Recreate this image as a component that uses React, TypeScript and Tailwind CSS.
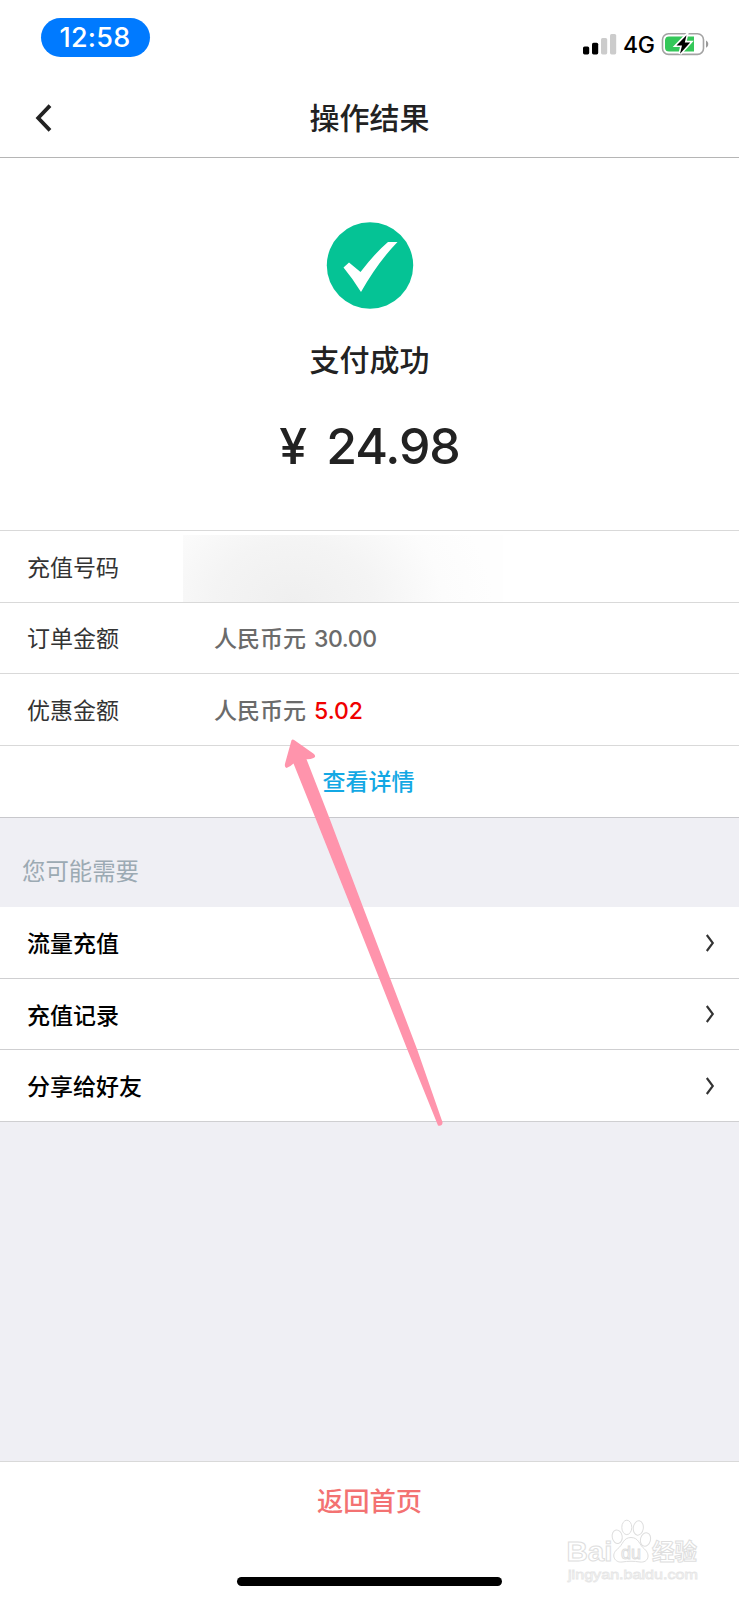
import type { ReactNode } from "react";

const orderRows = [
  { label: "订单金额", unit: "人民币元", value: "30.00", highlight: false },
  { label: "优惠金额", unit: "人民币元", value: "5.02", highlight: true },
];

const links = ["流量充值", "充值记录", "分享给好友"];

function SignalIcon() {
  return (
    <svg width="34" height="22" viewBox="0 0 34 22">
      <rect x="0" y="13.4" width="6.2" height="8" rx="1.6" fill="#000" />
      <rect x="9" y="9.7" width="6.2" height="11.7" rx="1.6" fill="#000" />
      <rect x="18" y="5" width="6.2" height="16.4" rx="1.6" fill="#ccc" />
      <rect x="27" y="1" width="6.2" height="20.4" rx="1.6" fill="#ccc" />
    </svg>
  );
}

function BatteryIcon() {
  return (
    <svg width="49" height="26" viewBox="0 0 49 26">
      <rect x="1.5" y="2.8" width="41" height="20.6" rx="6" fill="#fff" stroke="#a3a3a3" strokeWidth="1.6" />
      <path d="M8 5.6H33V20.6H8A4 4 0 0 1 4 17V9A4 4 0 0 1 8 5.6Z" fill="#34c759" />
      <path d="M45 9.6C48 11 48 15.4 45 16.8Z" fill="#999" />
      <path
        d="M25.5 4.2L15.5 14.4H21L19 22.8L29.2 11.4H23.8Z"
        fill="#000"
        stroke="#fff"
        strokeWidth="3.2"
        strokeLinejoin="miter"
        paintOrder="stroke"
      />
    </svg>
  );
}

function StatusBar() {
  return (
    <div className="flex h-[77px] items-start justify-between pl-[41px] pr-[29px]">
      <div className="mt-[18px] flex h-[39px] w-[109px] items-center justify-center rounded-full bg-[#007aff] pr-[1px] font-['Inter',sans-serif] text-[27px] font-medium leading-none tracking-[0.3px] text-white">
        12:58
      </div>
      <div className="mt-[30px] flex items-center">
        <SignalIcon />
        <span className="ml-[6px] w-[32px] pt-[2px] font-['Inter',sans-serif] text-[23px] font-medium leading-[26px] tracking-[-0.3px]">
          4G
        </span>
        <span className="ml-[6px]">
          <BatteryIcon />
        </span>
      </div>
    </div>
  );
}

function DetailRow({ label, children }: { label: string; children?: ReactNode }) {
  return (
    <div className="flex h-[71.5px] items-center border-b border-[#d9d9d9] pl-[27px] text-[23px] leading-[34px]">
      <span className="w-[187px] pt-[3px] text-[#333]">{label}</span>
      {children}
    </div>
  );
}

// Annotation drawn over the order details.
function PointerArrow() {
  return (
    <svg
      className="pointer-events-none absolute left-[270px] top-[720px]"
      width="200"
      height="420"
      viewBox="0 0 200 420"
    >
      <path
        d="M21.5 20.2Q22.5 19 24.5 20.2L44 34Q46.5 37 43.5 38Q40 39.5 36.5 39.2L59 97L93 187L147 329L172.6 402.5Q172 406.5 168 405.5L137.5 330L81 187L45 97L23.5 43.5Q20 47 16.5 48Q14 47 15.2 43Z"
        fill="#ff94ac"
      />
    </svg>
  );
}

function Watermark() {
  return (
    <svg
      className="pointer-events-none absolute left-[560px] top-[1515px]"
      width="150"
      height="75"
      viewBox="0 0 150 75"
    >
      <g fill="#fff" stroke="#dedede" strokeWidth="1">
        <g fontFamily="Liberation Sans, Noto Sans CJK SC, sans-serif" fontWeight="700">
          <text x="6.5" y="46" fontSize="28" textLength="46" lengthAdjust="spacingAndGlyphs">
            Bai
          </text>
          <text x="92" y="45" fontSize="23" textLength="45" lengthAdjust="spacingAndGlyphs">
            经验
          </text>
        </g>
        <ellipse cx="57.2" cy="21.7" rx="5" ry="6.8" transform="rotate(-10 57.2 21.7)" />
        <ellipse cx="66.8" cy="12.4" rx="5" ry="7.2" />
        <ellipse cx="78.3" cy="13" rx="5" ry="7.2" transform="rotate(8 78.3 13)" />
        <ellipse cx="85.5" cy="24.5" rx="5" ry="6.8" transform="rotate(15 85.5 24.5)" />
        <path d="M71 22.5C63 22.5 63 30 57.5 34C50 40 55 48 62 47C68 46 74 46 80 47C88 48 91 40 84.5 34C79 30 79 22.5 71 22.5Z" />
        <text x="61" y="43.5" fontSize="18" fontFamily="Liberation Sans, sans-serif" textLength="20">
          du
        </text>
        <text
          x="8"
          y="64"
          fontSize="13.5"
          fontFamily="Liberation Sans, sans-serif"
          textLength="130"
          lengthAdjust="spacingAndGlyphs"
          stroke="#e6e6e6"
          strokeWidth="0.8"
        >
          jingyan.baidu.com
        </text>
      </g>
    </svg>
  );
}

export default function App() {
  return (
    <div className="relative flex h-[1600px] w-[739px] flex-col overflow-hidden bg-[#efeff4] font-['Inter','Noto_Sans_CJK_SC',sans-serif] text-black">
      <div className="h-[158px] border-b border-[#b5b5b5] bg-white">
        <StatusBar />
        <header className="grid h-20 grid-cols-[1fr_auto_1fr] items-center pt-[2px] text-[#222]">
          <svg className="ml-[34px]" width="20" height="30" viewBox="0 0 20 30">
            <path d="M16 2.6L4.2 15L16 27.4" fill="none" stroke="#222" strokeWidth="3.8" />
          </svg>
          <h1 className="text-[30px] font-medium leading-[44px]">操作结果</h1>
        </header>
      </div>

      <section className="flex h-[373px] flex-col items-center border-b border-[#d9d9d9] bg-white text-[#222]">
        <svg className="mt-16" width="88" height="88" viewBox="0 0 88 88">
          <circle cx="44" cy="43.5" r="43.2" fill="#05c395" />
          <path d="M17.5 45.5L23 40.5L34.5 50Q49 31 62 20H71.5Q52 40 35 70Q27 57 17.5 45.5Z" fill="#fff" />
        </svg>
        <p className="mt-[28px] text-[30px] font-medium leading-[44px]">支付成功</p>
        <p className="mt-[34px] flex text-[50px] font-medium leading-[60px] tracking-[-1.1px]">
          <span className="w-[47px]">¥</span>
          <span>24.98</span>
        </p>
      </section>

      <section className="bg-white">
        <DetailRow label="充值号码">
          <div className="-ml-[31px] h-full w-[320px] pt-1">
            <div className="h-full bg-[radial-gradient(200px_150px_at_110px_100%,#efefef_0%,#f4f4f4_40%,#fcfcfc_75%,#fefefe_100%)]" />
          </div>
        </DetailRow>
        {orderRows.map((row) => (
          <DetailRow key={row.label} label={row.label}>
            <span className="pt-[3px] font-medium text-[#6b6b6b]">
              {row.unit}
              <span className={row.highlight ? "ml-2 text-[#f00000]" : "ml-2 tracking-[-0.4px]"}>
                {row.value}
              </span>
            </span>
          </DetailRow>
        ))}
        <div className="flex h-[72.5px] items-center justify-center border-b border-[#c8c8cc] pt-[2px] pr-[2px] text-[23px] font-medium leading-[34px] text-[#13a8e4]">
          查看详情
        </div>
      </section>

      <h2 className="h-[89px] pl-[22px] pt-[37px] text-[23.4px] leading-[34px] text-[#9caab3]">
        您可能需要
      </h2>

      <nav className="bg-white">
        {links.map((link) => (
          <a
            key={link}
            className="flex h-[71.5px] items-center justify-between border-b border-[#cfcfd1] pl-[27px] pr-[23px] text-[23px] font-medium leading-[34px]"
          >
            <span className="pt-[4px]">{link}</span>
            <svg className="mt-[1px]" width="12" height="20" viewBox="0 0 12 20">
              <path d="M2.8 2L8.8 10L2.8 18" fill="none" stroke="#333" strokeWidth="2.1" />
            </svg>
          </a>
        ))}
      </nav>

      <footer className="mt-auto flex h-[139px] flex-col items-center border-t border-[#d9d9d9] bg-white">
        <button type="button" className="mt-[20px] text-[26.3px] font-medium leading-[40px] text-[#f37272]">
          返回首页
        </button>
        <div className="mt-auto mb-[14px] h-[9px] w-[265px] rounded-full bg-black" />
      </footer>

      <PointerArrow />
      <Watermark />
    </div>
  );
}
